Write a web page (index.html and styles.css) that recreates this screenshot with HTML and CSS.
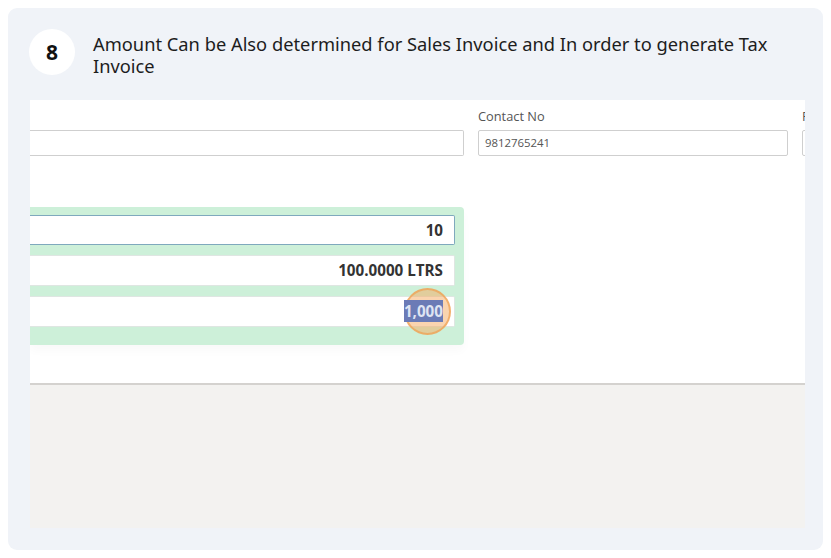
FILE: index.html
```html
<!DOCTYPE html>
<html>
<head>
<meta charset="utf-8">
<link rel="stylesheet" href="styles.css">
</head>
<body>
<div class="card">
  <div class="header">
    <div class="step">8</div>
    <div class="title">Amount Can be Also determined for Sales Invoice and In order to generate Tax Invoice</div>
  </div>
  <div class="shot">
    <div class="form">
      <div class="row">
        <div class="field f1">
          <div class="label">&nbsp;</div>
          <div class="input"></div>
        </div>
        <div class="field f2">
          <div class="label">Contact No</div>
          <div class="input">9812765241</div>
        </div>
        <div class="field f3">
          <div class="label">F</div>
          <div class="input"></div>
        </div>
      </div>
      <div class="panel">
        <div class="pinput focus">10</div>
        <div class="pinput">100.0000 LTRS</div>
        <div class="pinput"><span class="click"></span><span class="sel">1,000</span></div>
      </div>
    </div>
    <div class="footer"></div>
  </div>
</div>
</body>
</html>
```

FILE: styles.css
```css
* { box-sizing: border-box; }
html, body { margin: 0; padding: 0; background: #ffffff; }
body { width: 831px; height: 558px; font-family: "Noto Sans", "Open Sans", sans-serif; }

.card {
  margin: 8px;
  width: 815px;
  height: 542px;
  background: #f0f3f8;
  border-radius: 9px;
  padding: 21px 18px 22px 22px;
  display: flex;
  flex-direction: column;
}

.header {
  display: flex;
  align-items: flex-start;
  height: 71px;
}
.step {
  width: 46px;
  height: 46px;
  flex-shrink: 0;
  border-radius: 50%;
  background: #ffffff;
  margin-left: -1px;
  display: flex;
  align-items: center;
  justify-content: center;
  font-size: 21px;
  font-weight: 700;
  color: #111;
}
.title {
  margin-left: 18px;
  margin-top: 4px;
  font-size: 18.3px;
  line-height: 22px;
  color: #1d1d1d;
  width: 690px;
}

.shot {
  width: 775px;
  height: 428px;
  background: #ffffff;
  display: flex;
  flex-direction: column;
  overflow: hidden;
}
.form {
  padding-top: 8px;
  border-bottom: 2px solid #d4d2cf;
  height: 285px;
  flex-shrink: 0;
}
.row {
  display: flex;
  gap: 14px;
}
.field { display: flex; flex-direction: column; flex-shrink: 0; }
.f1 { width: 434px; }
.f2 { width: 310px; }
.f3 { width: 60px; }
.label {
  font-size: 12.8px;
  line-height: 16px;
  color: #555;
  height: 22px;
  font-family: "Open Sans", "Noto Sans", sans-serif;
}
.input {
  height: 26px;
  border: 1px solid #cfcfcf;
  border-radius: 2px;
  font-size: 11.4px;
  line-height: 24px;
  padding-left: 6px;
  color: #555;
  font-family: "Open Sans", "Noto Sans", sans-serif;
}
.f1 .input { border-left: none; border-radius: 0 2px 2px 0; }

.panel {
  margin-top: 51px;
  width: 434px;
  height: 138px;
  background: #cdf0d9;
  border-radius: 0 4px 4px 0;
  padding: 8px 9px 0 0;
  display: flex;
  flex-direction: column;
  gap: 10px;
  box-shadow: 0 6px 10px rgba(0,0,0,0.025);
}
.pinput {
  position: relative;
  height: 31px;
  background: #ffffff;
  border: 1px solid #dfe6e2;
  border-left: none;
  border-radius: 0 2px 2px 0;
  text-align: right;
  padding-right: 11px;
  font-size: 15.2px;
  font-weight: 700;
  line-height: 29px;
  color: #333;
  font-family: "Open Sans", "Noto Sans", sans-serif;
}
.pinput.focus { border: 1px solid #7fa9bd; border-left: none; height: 30px; }
.sel {
  background: #6b7bb6;
  color: #dfe4f2;
  padding: 1px 0;
  position: relative;
  z-index: 2;
}
.click {
  position: absolute;
  right: 3px;
  top: -9px;
  width: 47px;
  height: 47px;
  border-radius: 50%;
  background: rgba(246, 170, 95, 0.5);
  border: 2px solid rgba(240, 160, 80, 0.7);
  z-index: 1;
}

.footer {
  flex: 1;
  background: #f3f2f0;
}
```
